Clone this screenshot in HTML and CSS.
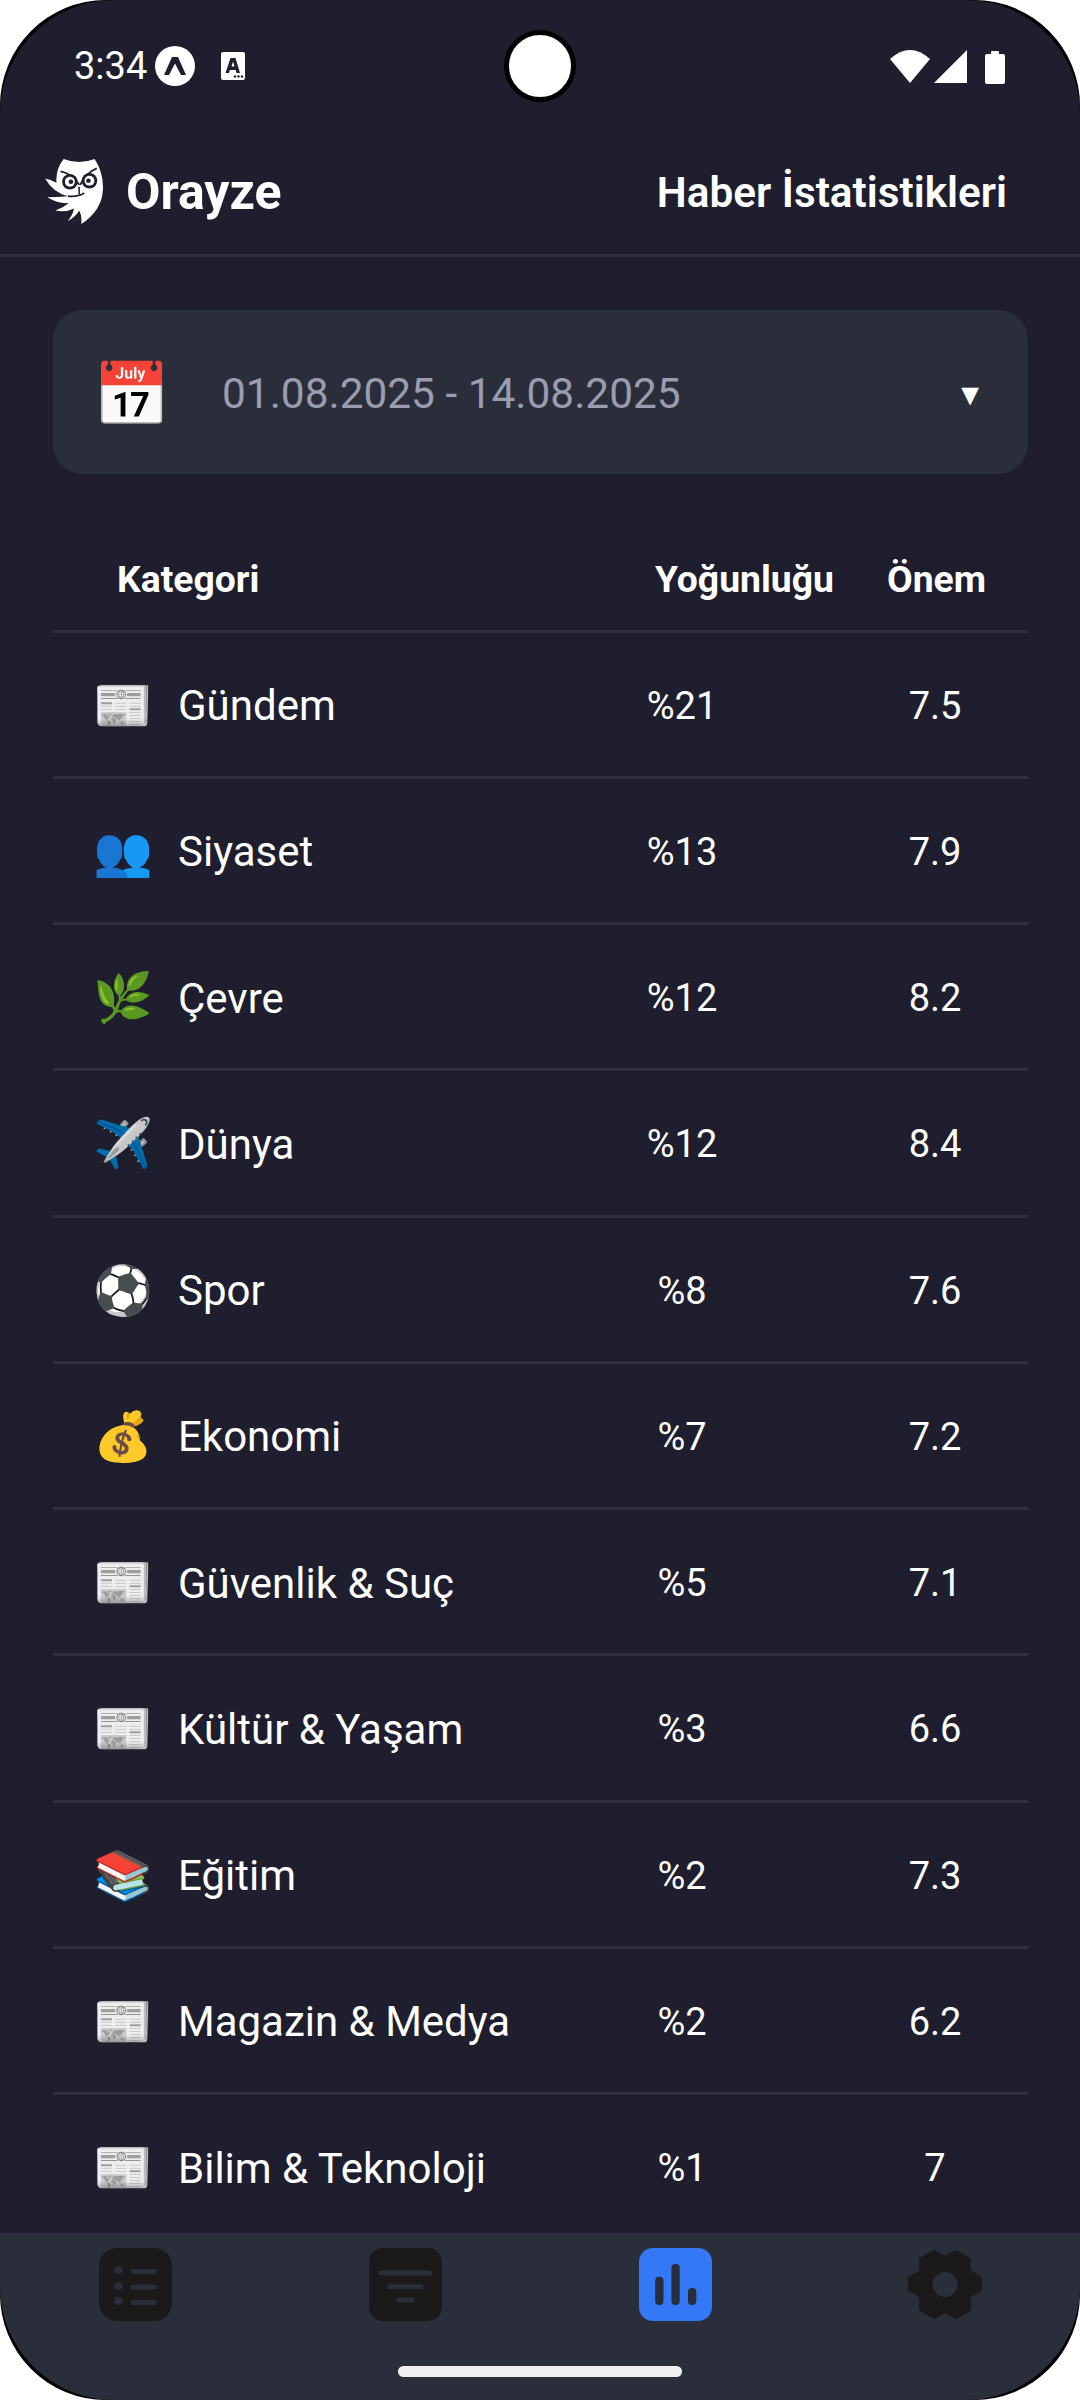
FILE: index.html
```html
<!DOCTYPE html>
<html lang="tr">
<head>
<meta charset="utf-8">
<title>Orayze</title>
<link rel="stylesheet" href="styles.css">
</head>
<body>
<div class="frame">
<div class="screen">
  <div class="camera"></div>
  <div class="status">
    <div class="status-left">
      <span class="time">3:34</span>
      <svg class="ic-expo" viewBox="0 0 40 40"><circle cx="20" cy="20" r="20" fill="#fff"/><path d="M17 11H23L31 29H26L20 17.500 14 29H9Z" fill="#1e1e2e"/></svg>
      <svg class="ic-a" viewBox="0 0 24 28"><rect width="24" height="28" rx="2" fill="#fff"/><path d="M9.500 6h5l4.500 15h-3.500l-.8-3H8.800l-.8 3H4.500zM10.500 14.500h3l-1.500-5z" fill="#1e1e2e" fill-rule="evenodd"/><circle cx="14" cy="24.500" r="1.200" fill="#1e1e2e"/><circle cx="17.500" cy="24.500" r="1.200" fill="#1e1e2e"/><circle cx="21" cy="24.500" r="1.200" fill="#1e1e2e"/></svg>
    </div>
    <div class="status-right">
      <svg class="ic-wifi" viewBox="0 0 40 33"><path d="M0 9 Q20 -9 40 9 L20 33 Z" fill="#fff"/></svg>
      <svg class="ic-signal" viewBox="0 0 33 33"><path d="M33 0V33H0Z" fill="#fff"/></svg>
      <svg class="ic-batt" viewBox="0 0 20 34"><path d="M6 2a1 1 0 0 1 1-1h6a1 1 0 0 1 1 1v2h4a2 2 0 0 1 2 2v26a2 2 0 0 1-2 2H2a2 2 0 0 1-2-2V6a2 2 0 0 1 2-2h4z" fill="#fff"/></svg>
    </div>
  </div>
  <header class="topbar">
    <div class="brand">
      <svg class="owl" viewBox="0 0 56 63"><path d="M18 0Q33 6 48 0Q57 14 56 30Q55 50 35 63Q36 55 33 50Q30 56 22 60Q27 54 28 48Q20 52 10 50Q18 47 23 43Q12 43 2 37Q12 37 22 36Q8 33 0 19Q5 20 11 23Q10 10 18 0Z" fill="#fff"/><g fill="none" stroke="#1e1e2e"><path d="M15 12Q26 14 33 25M50 9Q40 13 34 25" stroke-width="1.800"/><path d="M22 36Q32 37 38 33" stroke-width="1.600"/><path d="M33 27V34" stroke-width="1.500"/></g><circle cx="24" cy="22" r="7.500" fill="#1e1e2e"/><circle cx="43" cy="21" r="7.500" fill="#1e1e2e"/><circle cx="24" cy="22" r="4.800" fill="#fff"/><circle cx="43" cy="21" r="4.800" fill="#fff"/><circle cx="25" cy="22" r="2.200" fill="#1e1e2e"/><circle cx="42" cy="21" r="2.200" fill="#1e1e2e"/></svg>
      <span class="brand-name">Orayze</span>
    </div>
    <span class="page-title">Haber İstatistikleri</span>
  </header>
  <main class="content">
    <div class="date-card">
      <span class="cal">📅</span>
      <span class="date-text">01.08.2025 - 14.08.2025</span>
      <span class="caret">▼</span>
    </div>
    <div class="thead">
      <span>Kategori</span><span>Yoğunluğu</span><span>Önem</span>
    </div>
    <div class="row"><span class="cat"><span class="emo">📰</span>Gündem</span><span class="num">%21</span><span class="num">7.5</span></div>
    <div class="row"><span class="cat"><span class="emo">👥</span>Siyaset</span><span class="num">%13</span><span class="num">7.9</span></div>
    <div class="row"><span class="cat"><span class="emo">🌿</span>Çevre</span><span class="num">%12</span><span class="num">8.2</span></div>
    <div class="row"><span class="cat"><span class="emo">✈️</span>Dünya</span><span class="num">%12</span><span class="num">8.4</span></div>
    <div class="row"><span class="cat"><span class="emo">⚽</span>Spor</span><span class="num">%8</span><span class="num">7.6</span></div>
    <div class="row"><span class="cat"><span class="emo">💰</span>Ekonomi</span><span class="num">%7</span><span class="num">7.2</span></div>
    <div class="row"><span class="cat"><span class="emo">📰</span>Güvenlik &amp; Suç</span><span class="num">%5</span><span class="num">7.1</span></div>
    <div class="row"><span class="cat"><span class="emo">📰</span>Kültür &amp; Yaşam</span><span class="num">%3</span><span class="num">6.6</span></div>
    <div class="row"><span class="cat"><span class="emo">📚</span>Eğitim</span><span class="num">%2</span><span class="num">7.3</span></div>
    <div class="row"><span class="cat"><span class="emo">📰</span>Magazin &amp; Medya</span><span class="num">%2</span><span class="num">6.2</span></div>
    <div class="row"><span class="cat"><span class="emo">📰</span>Bilim &amp; Teknoloji</span><span class="num">%1</span><span class="num">7</span></div>
  </main>
  <nav class="tabs">
    <div class="tab">
      <svg class="tab-ic" viewBox="0 0 73 73"><rect width="73" height="73" rx="18" fill="#1a1a1a"/><g fill="#2a2e3a"><circle cx="19.500" cy="22" r="4"/><circle cx="19.500" cy="38" r="4"/><circle cx="19.500" cy="53" r="4"/><rect x="31.500" y="21" width="26" height="5" rx="2.500"/><rect x="31.500" y="36.500" width="26" height="5" rx="2.500"/><rect x="31.500" y="52" width="26" height="5" rx="2.500"/></g></svg>
    </div>
    <div class="tab">
      <svg class="tab-ic" viewBox="0 0 73 73"><rect width="73" height="73" rx="14" fill="#1a1a1a"/><g fill="#2a2e3a"><rect x="9.600" y="22.500" width="53.800" height="5" rx="2.500"/><rect x="18.600" y="36.200" width="35.800" height="5" rx="2.500"/><rect x="27.500" y="49.500" width="18" height="5" rx="2.500"/></g></svg>
    </div>
    <div class="tab">
      <svg class="tab-ic" viewBox="0 0 73 73"><rect width="73" height="73" rx="14" fill="#3478f6"/><g fill="#2a2e3a"><rect x="16.200" y="28.700" width="8.300" height="28.300" rx="4"/><rect x="32.400" y="16" width="8.300" height="41" rx="4"/><rect x="49" y="40" width="8.300" height="17" rx="4"/></g></svg>
    </div>
    <div class="tab">
      <svg class="tab-gear" viewBox="-1 -1 76 71"><path fill-rule="evenodd" fill="#1a1a1a" stroke="#1a1a1a" stroke-width="2" stroke-linejoin="round" d="M48.300 1 62 8.800V21L73 27.800V40L62 46.500V60L48.300 68 37 62 25.900 68 12 60V46.500L1 40V27.800L12 21V8.800L25.900 1 37 7ZM37 21a13.500 13.500 0 1 0 0 27 13.500 13.500 0 0 0 0-27Z"/></svg>
    </div>
    <div class="homebar"></div>
  </nav>
</div>
</div>
</body>
</html>
```

FILE: styles.css
```css
* { box-sizing: border-box; }
html, body { margin: 0; padding: 0; background: #fff; }
body { width: 1080px; height: 2400px; overflow: hidden; font-family: Roboto, "Noto Sans", sans-serif; }
.frame { width: 1080px; height: 2400px; background: #000; border-radius: 106px; }
.screen { position: relative; width: 1080px; height: 2400px; background: #1e1e2e; border-radius: 114px; overflow: hidden; display: flex; flex-direction: column; color: #fff; }
.camera { position: absolute; left: 504px; top: 30px; width: 72px; height: 72px; border-radius: 50%; background: #fff; border: 5px solid #000; }
.status { height: 100px; flex: none; padding: 46px 75px 0 74px; display: flex; justify-content: space-between; align-items: flex-start; }
.status-left { display: flex; align-items: center; height: 40px; }
.time { font-size: 38px; line-height: 40px; color: #fff; }
.ic-expo { width: 40px; height: 40px; margin-left: 8px; }
.ic-a { width: 24px; height: 28px; margin-left: 26px; }
.status-right { display: flex; align-items: flex-start; padding-top: 4px; }
.ic-wifi { width: 40px; height: 33px; margin-right: 4px; }
.ic-signal { width: 33px; height: 33px; margin-right: 18px; }
.ic-batt { width: 20px; height: 34px; }
.topbar { height: 157px; flex: none; padding: 30px 73px 0 45px; border-bottom: 3px solid #2e2e40; display: flex; align-items: center; justify-content: space-between; }
.brand { display: flex; align-items: center; }
.owl { width: 58px; height: 65px; margin-top: -1px; }
.brand-name { margin-left: 23px; font-size: 50px; font-weight: 700; }
.page-title { font-size: 42.3px; font-weight: 600; }
.content { flex: 1; min-height: 0; overflow: hidden; padding: 53px 52px 0 53px; }
.date-card { height: 164px; background: #2a2e3a; border-radius: 30px; display: flex; align-items: center; padding: 2px 43px 0 40px; }
.cal { font-family: "Noto Color Emoji", sans-serif; font-size: 62px; line-height: 1; width: 78px; flex: none; margin-top: 3px; }
.date-text { margin-left: 51px; flex: 1; font-size: 42.4px; color: #9a9cb0; }
.caret { font-size: 30px; color: #fff; margin-top: 2px; }
.thead { margin-top: 54px; height: 104.5px; padding: 0 42px 0 64px; display: grid; grid-template-columns: 1fr auto auto; column-gap: 53px; align-items: center; font-size: 37.3px; font-weight: 700; border-bottom: 3px solid #2e2e40; }
.row { height: 146.25px; padding-top: 3px; display: grid; grid-template-columns: 1fr 320px 186px; align-items: center; border-bottom: 3px solid #2e2e40; font-size: 38px; }
.cat { display: flex; align-items: center; padding-left: 40px; font-size: 42px; }
.emo { font-family: "Noto Color Emoji", sans-serif; font-size: 48px; width: 85px; flex: none; line-height: 1; }
.num { text-align: center; }
.tabs { position: relative; height: 167px; flex: none; background: #2a2e3a; border-top: 3px solid #2e2e40; display: grid; grid-template-columns: repeat(4, 1fr); align-items: start; padding-top: 12px; }
.tab { display: flex; justify-content: center; }
.tab-ic { width: 73px; height: 73px; display: block; }
.tab-gear { width: 76px; height: 71px; display: block; margin-top: 1px; }
.homebar { position: absolute; left: 398px; top: 130px; width: 284px; height: 11px; border-radius: 6px; background: #eeeff1; }
```
